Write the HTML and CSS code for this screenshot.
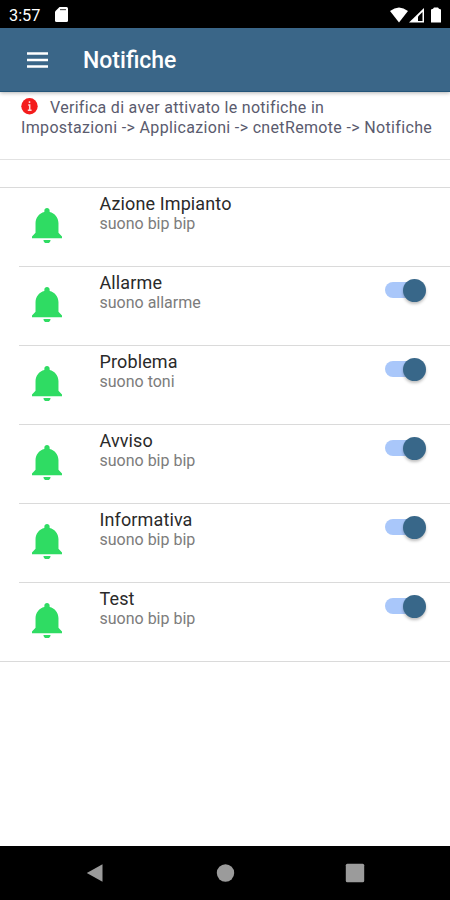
FILE: index.html
```
<!DOCTYPE html>
<html lang="it">

<head>
  <meta charset="utf-8">
  <title>Notifiche</title>
  <link rel="stylesheet" href="styles.css">
</head>

<body>
  <svg class="defs" width="0" height="0">
    <symbol id="bell" viewBox="80 48 352 416">
      <path d="M256 464c22.779 0 41.411-18.719 41.411-41.6h-82.823c0 22.881 18.633 41.6 41.412 41.6zm134.589-124.8V224.8c0-63.44-44.516-117.518-103.53-131.041V79.2c0-17.682-13.457-31.2-31.059-31.2s-31.059 13.518-31.059 31.2v14.559c-59.015 13.523-103.53 67.601-103.53 131.041v114.4L80 380.8v20.8h352v-20.8l-41.411-41.6z"/>
    </symbol>
  </svg>

  <div class="statusbar">
    <span class="clock">3:57</span>
    <svg class="sdcard" width="13" height="15" viewBox="0 0 13 15"><path d="M4.5 0h7a1.500 1.500 0 0 1 1.500 1.500v12a1.500 1.500 0 0 1-1.500 1.500h-10a1.500 1.500 0 0 1-1.500-1.500v-9z" fill="#fff"/><path d="M5 2.600h6" stroke="#555" stroke-width="1.200"/></svg>
    <svg class="signals" width="52" height="16" viewBox="0 0 52 16">
      <path d="M0 4Q9-3 18 4L9 15.500z" fill="#fff"/>
      <path d="M19 15.500L34 1v14.500z" fill="#fff"/>
      <path d="M28 9.500L32.500 5v9H28z" fill="#000"/>
      <path d="M44 .5h4q.5 1.500 3 2v13H41v-13q2.500-.5 3-2z" fill="#fff"/>
    </svg>
  </div>

  <header class="toolbar">
    <svg class="menu" width="21" height="16" viewBox="0 0 21 16"><path d="M0 1.500h21M0 8h21M0 14.500h21" stroke="#fff" stroke-width="2.300"/></svg>
    <h1>Notifiche</h1>
  </header>

  <main>
    <div class="info">
      <div class="info-line first">
        <svg width="17" height="17" viewBox="0 0 17 17"><circle cx="8.500" cy="8.300" r="8.200" fill="#f41c1c"/><path d="M8.500 3.200v1.900M7.200 7h1.500v5M6.800 12.300h3.800" stroke="#ffd9d9" stroke-width="1.500" fill="none"/></svg>
        <span class="verify">Verifica di aver attivato le notifiche in</span>
      </div>
      <div class="info-line">Impostazioni -&gt; Applicazioni -&gt; cnetRemote -&gt; Notifiche</div>
    </div>

    <ul class="list">
      <li class="item">
        <svg class="bell"><use href="#bell"/></svg>
        <div class="content">
          <div class="label"><h2>Azione Impianto</h2><p>suono bip bip</p></div>
        </div>
      </li>
      <li class="item">
        <svg class="bell"><use href="#bell"/></svg>
        <div class="content">
          <div class="label"><h2>Allarme</h2><p>suono allarme</p></div>
          <div class="toggle"></div>
        </div>
      </li>
      <li class="item">
        <svg class="bell"><use href="#bell"/></svg>
        <div class="content">
          <div class="label"><h2>Problema</h2><p>suono toni</p></div>
          <div class="toggle"></div>
        </div>
      </li>
      <li class="item">
        <svg class="bell"><use href="#bell"/></svg>
        <div class="content">
          <div class="label"><h2>Avviso</h2><p>suono bip bip</p></div>
          <div class="toggle"></div>
        </div>
      </li>
      <li class="item">
        <svg class="bell"><use href="#bell"/></svg>
        <div class="content">
          <div class="label"><h2>Informativa</h2><p>suono bip bip</p></div>
          <div class="toggle"></div>
        </div>
      </li>
      <li class="item">
        <svg class="bell"><use href="#bell"/></svg>
        <div class="content">
          <div class="label"><h2>Test</h2><p>suono bip bip</p></div>
          <div class="toggle"></div>
        </div>
      </li>
    </ul>
  </main>

  <nav class="navbar">
    <svg width="20" height="20" viewBox="0 0 20 20"><path d="M17.500 1.200v17.600L1.800 10z"/></svg>
    <svg width="20" height="20" viewBox="0 0 20 20"><circle cx="10.500" cy="10" r="8.700"/></svg>
    <svg width="20" height="20" viewBox="0 0 20 20"><rect x="0.800" y="0.800" width="18.400" height="18.400" rx="1.500"/></svg>
  </nav>
</body>

</html>
```
FILE: styles.css
```
* {
  box-sizing: border-box;
}

body {
  display: flex;
  flex-direction: column;
  height: 900px;
  margin: 0;
  overflow: hidden;
  font-family: Roboto, sans-serif;
  background-color: #fff;
}

h1, h2, p, ul {
  margin: 0;
  padding: 0;
}

.defs {
  display: none;
}

.statusbar {
  display: flex;
  align-items: center;
  height: 28px;
  padding: 1px 8px 0 9px;
  background-color: #000;
  color: #fff;
}

.clock {
  width: 46px;
  padding-top: 1px;
  font-size: 16.3px;
  font-weight: 400;
}

.signals {
  margin-left: auto;
}

.toolbar {
  display: flex;
  align-items: center;
  height: 64px;
  padding: 1px 0 0 27px;
  background-color: #3a6688;
  border-bottom: 1px solid #245579;
  box-shadow: 0 1px 4px rgba(0, 0, 0, 0.3);
  color: #fff;
}

.toolbar h1 {
  margin-left: 35px;
  padding-top: 1px;
  font-size: 23px;
  font-weight: 500;
}

main {
  flex: 1;
}

.info {
  height: 68px;
  padding: 6px 0 0 21px;
  border-bottom: 1px solid #e2e2e2;
  font-size: 16px;
  letter-spacing: 0.34px;
  color: #5a5b6e;
  white-space: nowrap;
}

.info-line {
  height: 20px;
  line-height: 20px;
}

.first {
  display: flex;
}

.verify {
  margin-left: 12px;
  letter-spacing: 0.3px;
}

.list {
  margin-top: 27px;
  border-top: 1px solid #dadada;
  border-bottom: 1px solid #dadada;
  list-style: none;
}

.item {
  display: flex;
  height: 79px;
  margin-left: 19px;
  padding-left: 12.500px;
  border-bottom: 1px solid #dadada;
}

.item:last-child {
  height: 78px;
  border-bottom: none;
}

.bell {
  width: 30px;
  height: 35.500px;
  margin-top: 19.500px;
  fill: #2fdc63;
}

.content {
  display: flex;
  flex: 1;
  justify-content: space-between;
  padding: 6px 24px 0 38px;
}

.label h2 {
  font-size: 18px;
  font-weight: 400;
  letter-spacing: 0.12px;
  line-height: 20px;
  color: #2a2a2a;
}

.label p {
  font-size: 16px;
  line-height: 20px;
  color: #7c7c7c;
}

/* switch in the on position */
.toggle {
  display: flex;
  align-items: center;
  width: 41px;
  height: 23px;
  margin-top: 5.500px;
}

.toggle::before {
  content: "";
  width: 32px;
  height: 16px;
  border-radius: 8px;
  background-color: #a9c7fa;
}

.toggle::after {
  content: "";
  width: 23px;
  height: 23px;
  margin-left: -14px;
  border-radius: 50%;
  background-color: #386789;
  box-shadow: 0 2px 3px rgba(0, 0, 0, 0.25);
}

.navbar {
  display: flex;
  justify-content: space-between;
  height: 54px;
  padding: 17px 85px 0;
  background-color: #000;
  fill: #9b9b9b;
}
```
